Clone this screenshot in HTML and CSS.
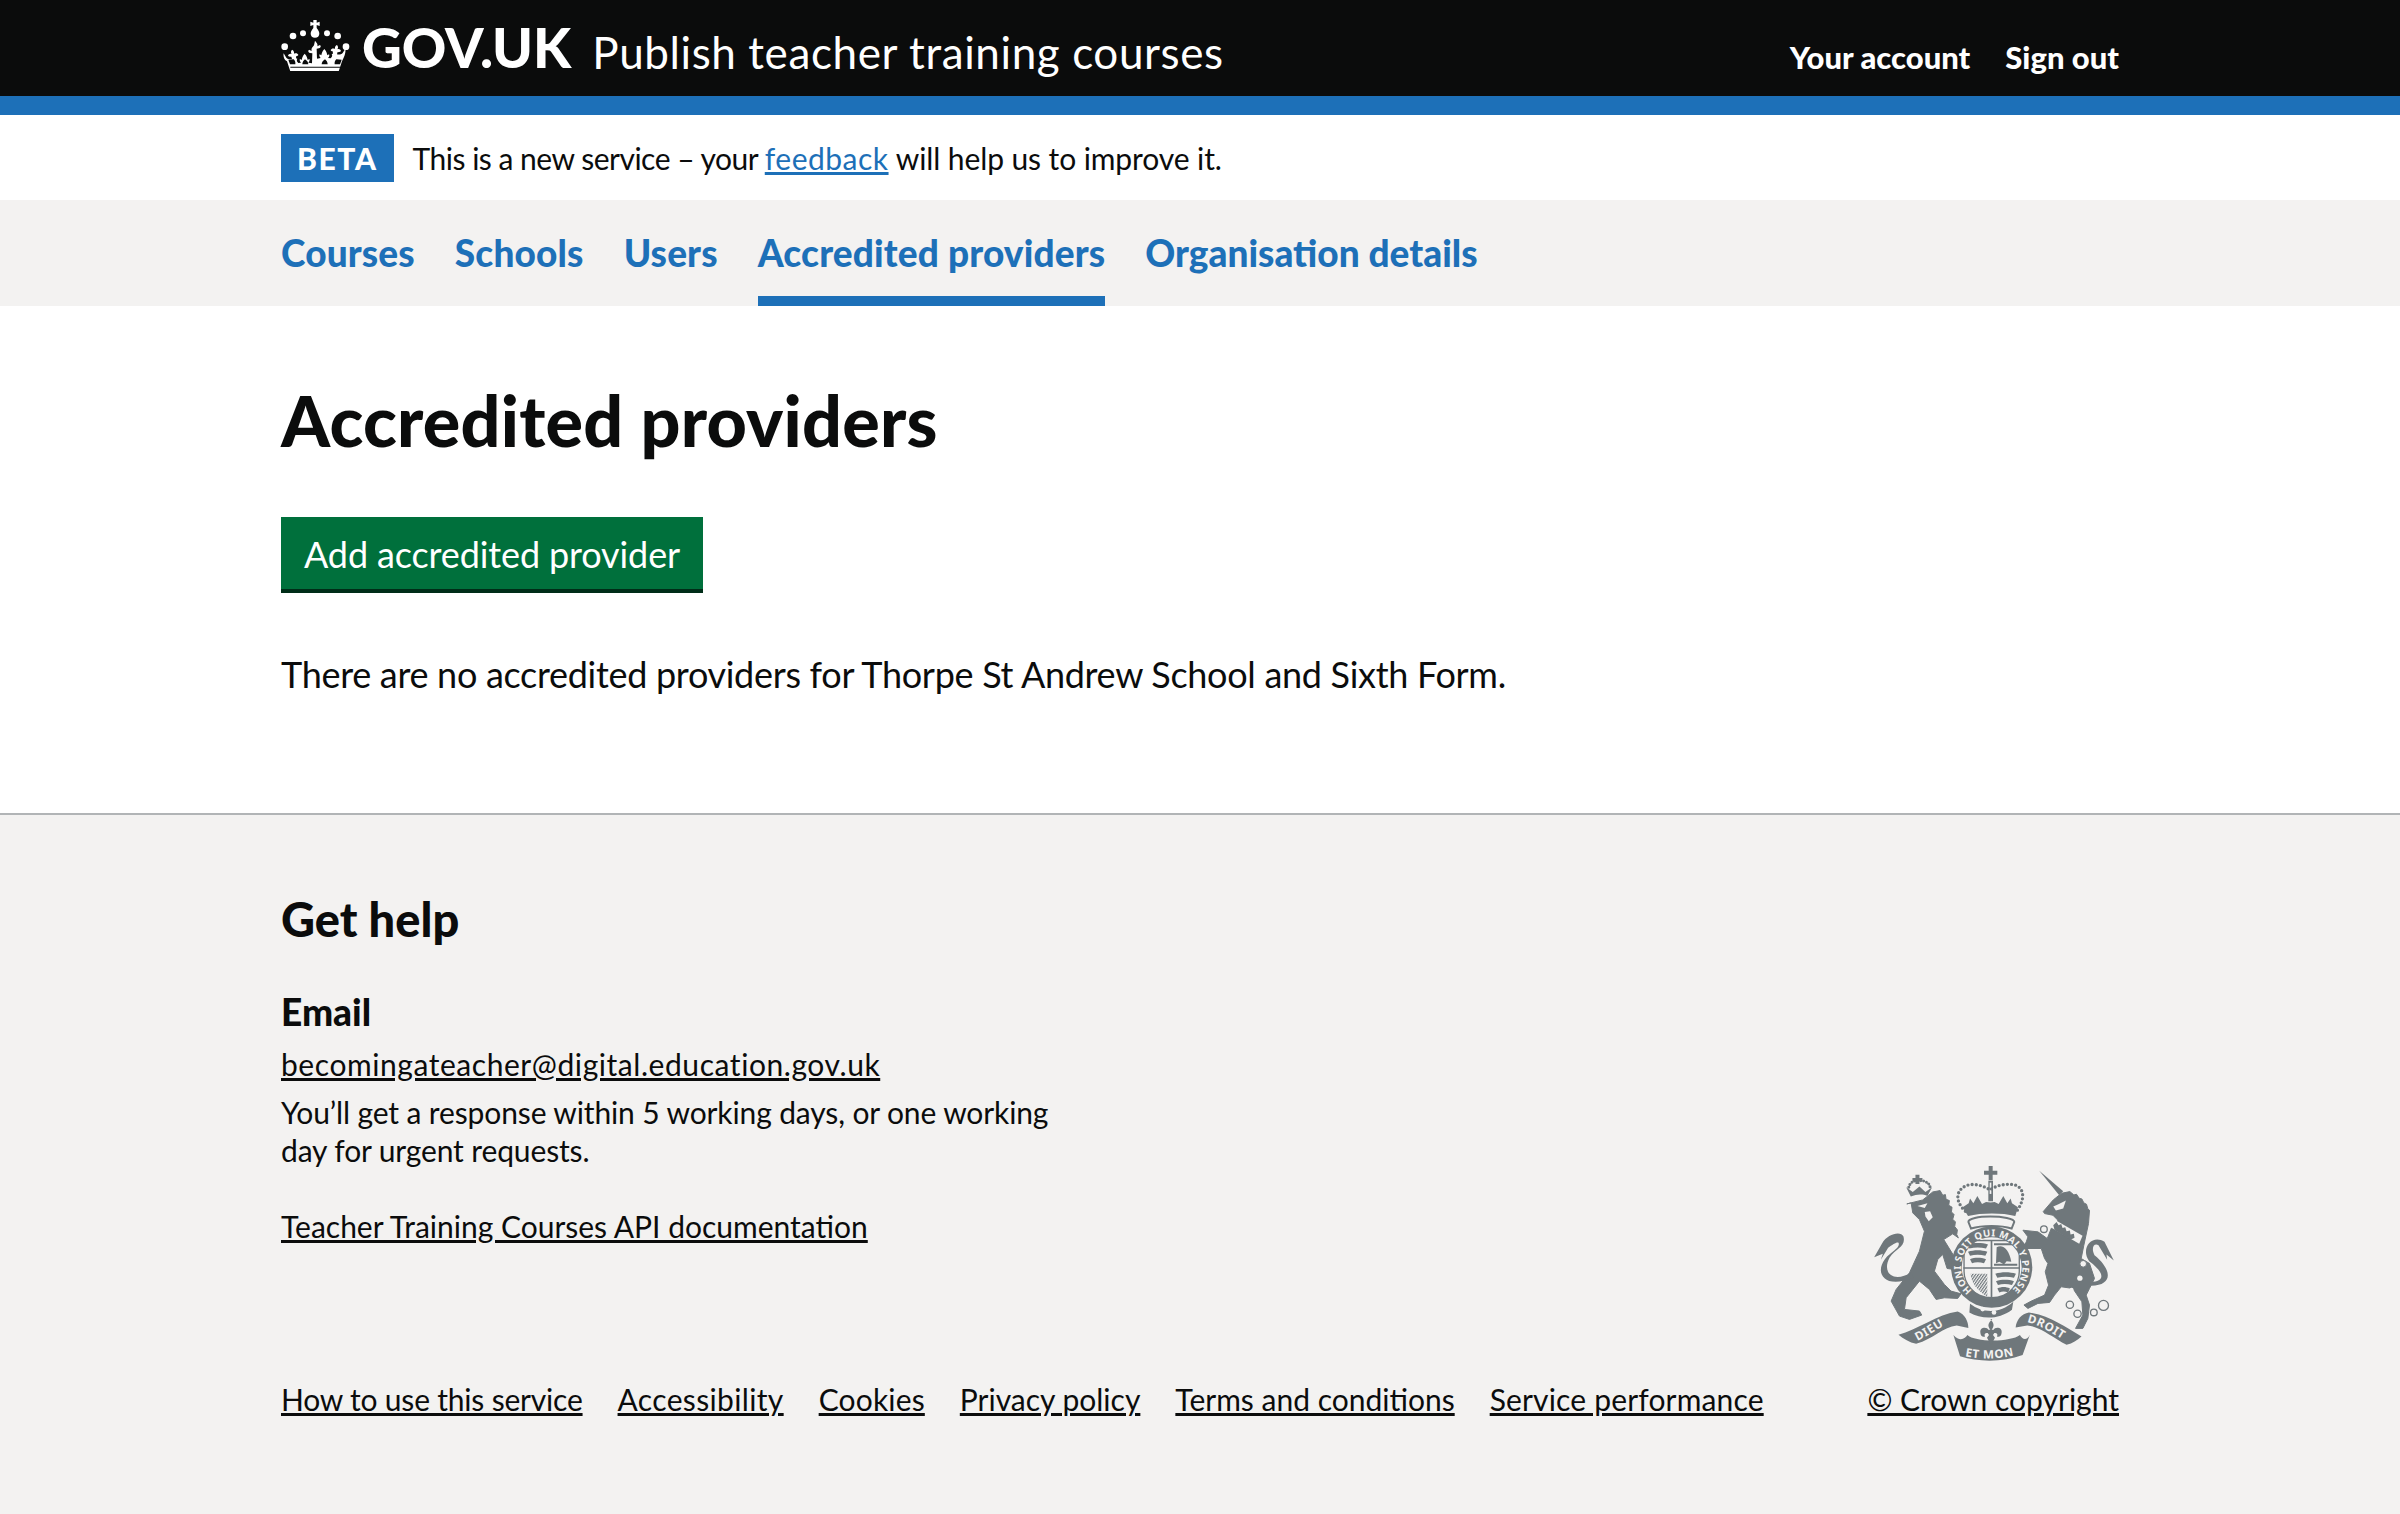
FILE: index.html
```html
<!DOCTYPE html>
<html lang="en">
<head>
<meta charset="utf-8">
<title>Accredited providers - Publish teacher training courses - GOV.UK</title>
<link rel="stylesheet" href="styles.css">
</head>
<body>
<header class="header">
  <div class="container header-inner">
    <a class="logo" href="#">
      <svg class="crown" viewBox="0 0 207 153" aria-hidden="true">
        <g fill="#fff">
          <path d="M97 0h10v8l9-3v13l-9-3v9c5 6 8 12 8 17 0 7-5 12-13 12s-13-5-13-12c0-5 3-11 8-17v-9l-9 3V5l9 3z"/>
          <circle cx="11" cy="80" r="10"/><circle cx="195" cy="80" r="10"/>
          <circle cx="36" cy="48" r="10"/><circle cx="170" cy="48" r="10"/>
          <circle cx="66" cy="40" r="9"/><circle cx="138" cy="40" r="9"/>
          <path d="M102 62c5 6 9 10 7 17l8-4c4 3 2 9-3 10l-7 1 1 30 11-2c-4-4-5-8-3-11l5 3c1-4 2-12 9-19 7 7 8 15 9 19l5-3c2 3 1 7-3 11l8 1c4-4 6-8 3-13l4-1-1-7c-3 0-5-1-6-4 2-4 7-6 13-3-1-5 1-10 6-12 4 4 4 9 1 13 5-2 10 1 11 5-2 3-6 4-10 3l-2 7c6 2 13 0 17-4l8-13c2 8-1 20-10 38l-10 30H28l-10-30C9 120 6 108 8 100l8 13c4 4 11 6 17 4l-2-7c-4 1-8 0-10-3 1-4 6-7 11-5-3-4-3-9 1-13 5 2 7 7 6 12 6-3 11-1 13 3-1 3-3 4-6 4l-1 7 4 1c-3 5-1 9 3 13l8-1c-4-4-5-8-3-11l5 3c1-4 2-12 9-19 7 7 8 15 9 19l5-3c2 3 1 7-3 11l11 2 1-30-7-1c-5-1-7-7-3-10l8 4c-2-7 2-11 7-17z"/>
        </g>
        <g fill="#0b0c0c">
          <path d="M28 140h150v3H28z"/>
          <path d="M72 118c-4 3-8 8-8 15h18c0-7-5-12-10-15zM132 118c-5 3-10 8-10 15h18c0-7-4-12-8-15z"/>
          <path d="M38 118c4 4 6 9 5 15H27l-5-14zM166 118c-4 4-6 9-5 15h16l5-14z"/>
        </g>
      </svg>
      <span class="logo-text">GOV.UK</span>
    </a>
    <a class="service-name" href="#">Publish teacher training courses</a>
    <nav class="header-nav">
      <a href="#">Your account</a>
      <a href="#">Sign out</a>
    </nav>
  </div>
</header>
<div class="blue-bar"></div>

<div class="phase">
  <strong class="tag">BETA</strong>
  <span class="phase-text">This is a new service – your <a class="link" href="#">feedback</a> <span class="phase-end">will help us to improve it.</span></span>
</div>

<nav class="primary-nav">
  <ul class="container nav-list">
    <li><a href="#">Courses</a></li>
    <li><a href="#">Schools</a></li>
    <li><a href="#">Users</a></li>
    <li><a class="current" href="#">Accredited providers</a></li>
    <li><a href="#">Organisation details</a></li>
  </ul>
</nav>

<main class="main">
  <h1>Accredited providers</h1>
  <a class="button" href="#">Add accredited provider</a>
  <p class="body">There are no accredited providers for Thorpe St Andrew School and Sixth Form.</p>
</main>

<footer class="footer">
  <div class="container footer-inner">
    <div class="footer-left">
      <h2>Get help</h2>
      <h3>Email</h3>
      <p class="f-line"><a href="#">becomingateacher@digital.education.gov.uk</a></p>
      <p class="f-note">You’ll get a response within 5 working days, or one working day for urgent requests.</p>
      <p class="f-api"><a href="#">Teacher Training Courses API documentation</a></p>
      <ul class="meta">
        <li class="tight"><a href="#">How to use this service</a></li>
        <li class="loose"><a href="#">Accessibility</a></li>
        <li class="slight"><a href="#">Cookies</a></li>
        <li><a href="#">Privacy policy</a></li>
        <li><a href="#">Terms and conditions</a></li>
        <li class="slight"><a href="#">Service performance</a></li>
      </ul>
    </div>
    <div class="footer-right">
      <svg class="arms" viewBox="0 0 900 640" aria-hidden="true">
        <defs>
          <path id="ring" d="M396 422A92 92 0 1 1 514 422"/>
          <path id="rib-l" d="M232 574C270 556 305 528 335 516"/>
          <path id="rib-c" d="M368 618C420 630 485 630 540 612"/>
          <path id="rib-r" d="M558 517C600 525 640 552 682 578"/>
          <pattern id="hatch" width="7" height="7" patternUnits="userSpaceOnUse" patternTransform="rotate(35)"><rect width="7" height="7" fill="#f3f2f1"/><rect width="3.5" height="7" fill="#6f777b"/></pattern>
        </defs>
        <g fill="#6f777b">
          <path d="M226 74h12v10h9v10h-9v8h-12v-8h-9V84h9z"/>
          <path d="M206 112c2-14 18-22 33-20 15 0 29 6 31 20" fill="none" stroke="#6f777b" stroke-width="9" stroke-dasharray="0 9" stroke-linecap="round"/>
          <path d="M212 140l-14-28 20 14 20-16 18 16 20-14-14 26c-14-6-32-6-50 2z"/>
          <path class="beast" d="M200 162l48-12 30-24 22-4 8 14 8-2 2 14 10 4-2 14 10 6-2 14 8 8-4 14 8 8-2 14 8 10-2 14 5 10-17-12-27 17 37 60-5 30-22-3-13-42-15 15-10 35 30 40 20 20 30 8-10 14-40-2-25 5-20-30-30-25-40 50-5 35 45 5 7 12-37 13-30-10-25-45 15-35 40-50 30-65 15-60-15-35-20-20-5-30z"/>
          <path d="M232 168l30-8-8 14zM254 186l16-2 8 18-12 12-10-14z" fill="#f3f2f1"/>
          <path d="M214 368c-54 32-90 2-66-44 20-30 50-32 42-64-8-18-48-8-64 20l-24 42 26-10-6 18 22-36c16-12 32-22 32-12 2 14-24 24-42 46-30 40-4 92 86 56z"/>
          <path d="M598 62l72 62-12 12z"/>
          <path class="beast" d="M610 185l30-35 25-20 25-5 12 10 8-2 8 12 8 2 6 12 8 4 4 14 5 4-3 40-14 65-8 40 25 15 15 45-15 30-10 20 10 30-5 40-15 30h-22l22-40-3-40-27-40-35-5-20 25-15 22-35 3-30 15-12-10 22-12 40-18 12-30-10-40 8-25-10-15-10-30h-55l10-20 5-15-15-20 45 5 28 20 12-30 20-25-15-15-25-5z"/>
          <path d="M752 396c48 0 40-30-4-62-28-40 10-82 46-58l28 56-22-18 2 16-26-44c-16-8-22 12-12 30 50 40 60 90-10 92z"/>
          <path d="M640 170l14-6 24-12-8 24-22 6z" fill="#f3f2f1"/>
          <path d="M446 48h12v14h14v12h-14v16h-12V74h-14V62h14z"/>
          <path d="M445 92h14v62h-14z"/>
          <path d="M449 98h5v34h-5z" fill="#f3f2f1"/>
          <path d="M376 184C340 150 350 115 385 105 410 100 435 110 450 120 470 105 500 100 525 105 555 115 555 150 530 184" fill="none" stroke="#6f777b" stroke-width="10" stroke-dasharray="0 12.5" stroke-linecap="round"/>
          <path d="M368 172l18-12 4-14 10 14 12-22 14 24 12-6 14 2 12-2 12 6 14-24 12 22 10-14 4 14 18 12-8 26c-40-10-100-10-142 0z"/>
          <path d="M385 216c0-10 30-16 66-16s72 6 72 16l-8 20c-30-10-90-10-122 0z" fill="#f3f2f1" stroke="#6f777b" stroke-width="6"/>
          <circle cx="455" cy="352" r="122"/>
          <circle cx="455" cy="352" r="90" fill="#f3f2f1"/>
          <path d="M372 270h166v4H372zM452 270h5v188h-5zM370 352h170v5H370z"/>
          <path d="M372 270v95c0 45 40 75 83 95 43-20 83-50 83-95v-95" fill="none" stroke="#6f777b" stroke-width="4"/>
          <path d="M382 284c18-6 44-6 62 0l-6 12c-16-4-34-4-50 0zM384 306c18-6 40-6 58 0l-6 12c-14-4-32-4-46 0zM390 328c14-6 32-6 48 0l-6 12c-12-4-26-4-36 0z"/>
          <path d="M470 292c18-10 38 6 44 44l-14-2-8 10-14-8-10 4z"/>
          <path d="M462 280h70v6h-70zM462 342h70v6h-70z"/>
          <path d="M466 372c18-6 44-6 62 0l-6 12c-16-4-34-4-50 0zM468 394c16-6 38-6 54 0l-6 12c-14-4-30-4-42 0zM472 416c12-6 26-6 38 0l-6 12c-8-4-18-4-26 0z"/>
          <path d="M392 372h50v70c-30-20-50-44-50-70z" fill="url(#hatch)"/>
          <text class="ring-text" fill="#f3f2f1"><textPath href="#ring" textLength="445" lengthAdjust="spacing">HONI SOIT QUI MAL Y PENSE</textPath></text>
          <path d="M390 462c40 30 90 30 130-6l-4 24c-40 30-90 30-128 8z"/>
          <circle cx="428" cy="478" r="7" fill="#f3f2f1"/><circle cx="462" cy="488" r="7" fill="#f3f2f1"/>
          <path d="M632 232l14-22 82 48-10 24z" fill="#f3f2f1"/>
          <path d="M640 226l10-10 6 10 8-4 4 12 8-2 4 12 10-2 2 12 10-2 2 12-12 6-48-30z"/>
          <circle cx="612" cy="238" r="10" fill="#f3f2f1" stroke="#6f777b" stroke-width="4"/>
          <circle cx="595" cy="318" r="9" fill="#f3f2f1"/>
          <circle cx="730" cy="342" r="10" fill="#f3f2f1" stroke="#6f777b" stroke-width="3"/>
          <circle cx="720" cy="385" r="8" fill="#f3f2f1"/>
          <circle cx="695" cy="420" r="6" fill="#f3f2f1"/>
          <g fill="none" stroke="#6f777b" stroke-width="4">
            <circle cx="690" cy="465" r="11"/><circle cx="713" cy="492" r="11"/><circle cx="762" cy="488" r="10"/><circle cx="791" cy="467" r="15"/>
          </g>
          <path d="M175 555c55-14 118-62 178-70 22 8 32 30 32 50l-35-8c-40 4-70 40-122 55-20-4-38-14-53-27z"/>
          <path d="M527 533c2-22 18-42 40-45 60 8 110 44 158 72-14 12-26 20-45 25-40-20-80-55-118-58z"/>
          <path d="M340 556c20 22 36 10 42 0 22 22 130 22 158 0 6 12 20 20 30-2l-22 62c-60 22-130 22-188 4z"/>
          <text class="rib-text" fill="#f3f2f1"><textPath href="#rib-l">DIEU</textPath></text>
          <text class="rib-text" fill="#f3f2f1"><textPath href="#rib-c" startOffset="4%">ET MON</textPath></text>
          <text class="rib-text" fill="#f3f2f1"><textPath href="#rib-r" startOffset="2%">DROIT</textPath></text>
          <path d="M451 508c10 12 14 20 4 32h6c2-8 26-10 24 8 0 10-8 16-14 12 4-8-2-12-8-10l-4 6 6 8c-4 8-8 14-12 22-4-8-8-14-12-22l6-8-4-6c-6-2-12 2-8 10-6 4-14-2-14-12-2-18 22-16 24-8h6c-10-12-6-20 6-32z"/>
        </g>
      </svg>
      <a class="copyright" href="#">© Crown copyright</a>
    </div>
  </div>
</footer>
</body>
</html>
```

FILE: styles.css
```css
* { box-sizing: border-box; }
html, body { margin: 0; padding: 0; }
body {
  font-family: Lato, "Noto Sans", "Liberation Sans", sans-serif;
  color: #0b0c0c;
  background: #f3f2f1;
}
a { color: inherit; }
ul { list-style: none; margin: 0; padding: 0; }
.container { width: 1838px; margin: 0 281px; }

.header { background: #0b0c0c; color: #fff; height: 96px; }
.header-inner { display: flex; align-items: flex-start; height: 96px; }
.logo { display: flex; align-items: flex-start; text-decoration: none; padding-top: 20px; }
.crown { width: 69px; height: 51px; display: block; }
.logo-text { font-size: 55px; font-weight: 900; line-height: 56px; margin-left: 12px; margin-top: -1px; }
.service-name { font-size: 44px; line-height: 52px; margin-left: 21px; margin-top: 26px; text-decoration: none; letter-spacing: 0.6px; }
.header-nav { margin-left: auto; display: flex; gap: 35px; margin-top: 37px; font-size: 31px; line-height: 40px; font-weight: 900; }
.header-nav a { text-decoration: none; }
.blue-bar { height: 19px; background: #1d70b8; }

.phase { display: flex; align-items: center; gap: 19px; height: 85px; font-size: 30px; padding: 0 281px; background: #fff; }
.phase-text { letter-spacing: -0.5px; }
.phase-end { letter-spacing: -0.1px; }
.tag { background: #1d70b8; color: #fff; font-size: 30px; font-weight: 900; line-height: 48px; height: 48px; padding: 0 16px; letter-spacing: 1.6px; }
.link { color: #1d70b8; letter-spacing: 0.5px; }

.primary-nav { background: #f3f2f1; height: 106px; }
.nav-list { display: flex; gap: 40px; height: 106px; }
.nav-list li { display: flex; }
.nav-list a { display: block; height: 106px; padding-top: 30px; font-size: 37px; line-height: 46px; font-weight: 900; color: #1d70b8; text-decoration: none; letter-spacing: 0.15px; }
.nav-list li:last-child a { letter-spacing: 0; }
.nav-list a.current { border-bottom: 10px solid #1d70b8; }

.main { height: 507px; padding: 74px 281px 0; background: #fff; }
h1 { margin: 0 0 57px; font-size: 70px; line-height: 80px; font-weight: 900; letter-spacing: 0.24px; }
.button { display: inline-block; background: #00703c; color: #fff; font-size: 36px; line-height: 74px; height: 76px; padding: 0 23px; text-decoration: none; box-shadow: inset 0 -4px 0 #002d18; letter-spacing: -0.12px; }
.body { margin: 56px 0 0; font-size: 36px; line-height: 50px; letter-spacing: -0.3px; }

.footer { background: #f3f2f1; border-top: 2px solid #b1b4b6; height: 701px; }
.footer-inner { display: flex; justify-content: space-between; align-items: flex-end; height: 603px; }
.footer-left { display: flex; flex-direction: column; }
h2 { margin: 0 0 39.5px; font-size: 47px; line-height: 60px; font-weight: 900; }
h3 { margin: 0 0 10px; font-size: 37px; line-height: 46px; font-weight: 900; }
.f-line, .f-note, .f-api { margin: 0; font-size: 30px; line-height: 38px; }
.f-line { margin-bottom: 10.5px; letter-spacing: 0.56px; }
.f-note { width: 790px; letter-spacing: -0.13px; }
.f-api { margin-top: 38px; }
.meta { display: flex; gap: 35px; font-size: 30px; line-height: 38px; margin-top: 135px; white-space: nowrap; }
.tight { letter-spacing: -0.2px; }
.loose { letter-spacing: 0.35px; }
.slight { letter-spacing: 0.16px; }
.footer-right { display: flex; flex-direction: column; align-items: flex-end; font-size: 30px; line-height: 38px; white-space: nowrap; }
.arms { width: 300px; height: 213px; display: block; margin: 0 -21px 17px 0; }
.beast { stroke: #6f777b; stroke-width: 3; stroke-linejoin: round; }
.ring-text { font-family: "Noto Sans", sans-serif; font-size: 29px; font-weight: 700; }
.rib-text { font-family: "Noto Sans", sans-serif; font-size: 35px; font-weight: 700; letter-spacing: 2px; }
```
